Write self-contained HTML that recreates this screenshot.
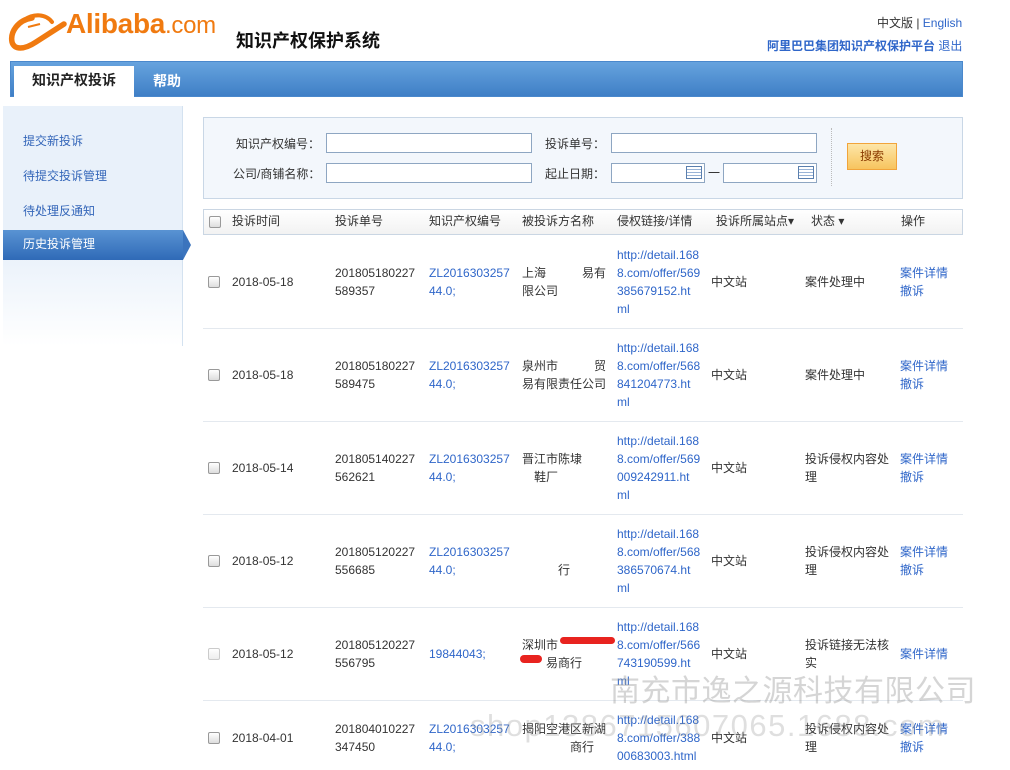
<!DOCTYPE html><html><head><meta charset="utf-8"><style>
*{margin:0;padding:0;box-sizing:border-box}
body{width:1010px;height:770px;overflow:hidden;background:#fff;font-family:"Liberation Sans","Noto Sans CJK SC",sans-serif;font-size:12px;color:#333;position:relative}
.a{position:absolute}
.blue{color:#2f66c9}
.nav{left:10px;top:61px;width:953px;height:36px;background:linear-gradient(#66a3de,#3f7fc6);border:1px solid #4a88cc}
.tab{left:14px;top:66px;width:120px;height:31px;background:#fff;font-size:14px;font-weight:bold;color:#222;text-align:center;line-height:28px}
.side{left:3px;top:106px;width:180px;height:240px;background:linear-gradient(#e9f1fa 60%,#fff);border-right:1px solid #d4e2f0}
.sl{left:23px;font-size:12px;color:#3466b9}
.act{left:3px;top:230px;width:180px;height:30px;background:linear-gradient(#5993d3,#2f6ab7);color:#fff;line-height:29px;padding-left:20px;font-size:12px}
.sbox{left:203px;top:117px;width:760px;height:82px;background:#f3f7fc;border:1px solid #c9d7e6}
.in{height:20px;border:1px solid #8ea6c2;background:#fff}
.lab{font-size:12px;color:#333}
.th{left:203px;top:209px;width:760px;height:26px;border:1px solid #cad6e3;background:linear-gradient(#fff,#f2f2f2)}
.cb{width:12px;height:12px;border:1px solid #999;border-radius:2px;background:linear-gradient(#fff,#ddd)}
.sep{left:203px;width:760px;height:1px;background:#e4e9ef}
.cell{line-height:18px;font-size:12px}
.cal{width:16px;height:13px;border:1px solid #5a7fae;background:repeating-linear-gradient(#fff 0 2px,#9ab4d6 2px 3px)}
</style></head><body>
<svg class="a" style="left:8px;top:10px" width="62" height="42" viewBox="0 0 62 42"><path d="M24 8 C10 10 2 22 4 32 C6 40 16 40 28 32 L56 14" stroke="#f07a10" stroke-width="5.5" fill="none" stroke-linecap="round"/><path d="M16 10 C26 3 38 4 44 12" stroke="#f07a10" stroke-width="4" fill="none" stroke-linecap="round"/><path d="M20 17 L32 14" stroke="#f07a10" stroke-width="2"/><circle cx="74" cy="43" r="1.5" fill="#f07a10"/></svg>
<div class="a" style="left:66px;top:8px;font-size:28px;font-weight:bold;color:#f07a10;letter-spacing:-0.3px">Alibaba<span style="font-weight:normal;font-size:24px">.com</span></div>
<div class="a" style="left:236px;top:27px;font-size:18px;font-weight:bold;color:#111">知识产权保护系统</div>
<div class="a" style="left:877px;top:14px;color:#333">中文版 | <span class="blue">English</span></div>
<div class="a" style="left:767px;top:37px;font-weight:bold;color:#2f66c9">阿里巴巴集团知识产权保护平台 <span style="font-weight:normal">退出</span></div>
<div class="a nav"></div>
<div class="a tab">知识产权投诉</div>
<div class="a" style="left:153px;top:71px;font-size:14px;font-weight:bold;color:#fff">帮助</div>
<div class="a side"></div>
<div class="a sl" style="top:132px">提交新投诉</div>
<div class="a sl" style="top:167px">待提交投诉管理</div>
<div class="a sl" style="top:202px">待处理反通知</div>
<div class="a act">历史投诉管理</div>
<div class="a" style="left:183px;top:230px;width:0;height:0;border-top:15px solid transparent;border-bottom:15px solid transparent;border-left:8px solid #3b74bd"></div>
<div class="a sbox"></div>
<div class="a lab" style="left:236px;top:135px">知识产权编号：</div>
<div class="a in" style="left:326px;top:133px;width:206px"></div>
<div class="a lab" style="left:233px;top:165px">公司/商铺名称：</div>
<div class="a in" style="left:326px;top:163px;width:206px"></div>
<div class="a lab" style="left:545px;top:135px">投诉单号：</div>
<div class="a in" style="left:611px;top:133px;width:206px"></div>
<div class="a lab" style="left:545px;top:165px">起止日期：</div>
<div class="a in" style="left:611px;top:163px;width:94px"></div>
<div class="a cal" style="left:686px;top:166px"></div>
<div class="a" style="left:708px;top:164px">一</div>
<div class="a in" style="left:723px;top:163px;width:94px"></div>
<div class="a cal" style="left:798px;top:166px"></div>
<div class="a" style="left:831px;top:128px;height:58px;border-left:1px dotted #bbb"></div>
<div class="a" style="left:847px;top:143px;width:50px;height:27px;background:linear-gradient(#fde6a8,#f7c45e);border:1px solid #f1a43b;color:#8a3a00;text-align:center;line-height:25px">搜索</div>
<div class="a th"></div>
<div class="a cb" style="left:209px;top:216px"></div>
<div class="a cell" style="left:232px;top:212px">投诉时间</div>
<div class="a cell" style="left:335px;top:212px">投诉单号</div>
<div class="a cell" style="left:429px;top:212px">知识产权编号</div>
<div class="a cell" style="left:522px;top:212px">被投诉方名称</div>
<div class="a cell" style="left:617px;top:212px">侵权链接/详情</div>
<div class="a cell" style="left:716px;top:212px">投诉所属站点▾</div>
<div class="a cell" style="left:811px;top:212px">状态 ▾</div>
<div class="a cell" style="left:901px;top:212px">操作</div>

<div class="a cb" style="left:208px;top:276px"></div><div class="a cell" style="left:232px;top:273px">2018-05-18</div>
<div class="a cell" style="left:335px;top:264px">201805180227<br>589357</div><div class="a cell blue" style="left:429px;top:264px">ZL2016303257<br>44.0;</div>
<div class="a cell" style="left:522px;top:264px">上海　　　易有<br>限公司</div><div class="a cell blue" style="left:617px;top:246px">http://detail.168<br>8.com/offer/569<br>385679152.ht<br>ml</div>
<div class="a cell" style="left:711px;top:273px">中文站</div><div class="a cell" style="left:805px;top:273px">案件处理中</div><div class="a cell blue" style="left:900px;top:264px">案件详情<br>撤诉</div>
<div class="a sep" style="top:328px"></div>

<div class="a cb" style="left:208px;top:369px"></div><div class="a cell" style="left:232px;top:366px">2018-05-18</div>
<div class="a cell" style="left:335px;top:357px">201805180227<br>589475</div><div class="a cell blue" style="left:429px;top:357px">ZL2016303257<br>44.0;</div>
<div class="a cell" style="left:522px;top:357px">泉州市　　　贸<br>易有限责任公司</div><div class="a cell blue" style="left:617px;top:339px">http://detail.168<br>8.com/offer/568<br>841204773.ht<br>ml</div>
<div class="a cell" style="left:711px;top:366px">中文站</div><div class="a cell" style="left:805px;top:366px">案件处理中</div><div class="a cell blue" style="left:900px;top:357px">案件详情<br>撤诉</div>
<div class="a sep" style="top:421px"></div>

<div class="a cb" style="left:208px;top:462px"></div><div class="a cell" style="left:232px;top:459px">2018-05-14</div>
<div class="a cell" style="left:335px;top:450px">201805140227<br>562621</div><div class="a cell blue" style="left:429px;top:450px">ZL2016303257<br>44.0;</div>
<div class="a cell" style="left:522px;top:450px">晋江市陈埭　　<br>　鞋厂</div><div class="a cell blue" style="left:617px;top:432px">http://detail.168<br>8.com/offer/569<br>009242911.ht<br>ml</div>
<div class="a cell" style="left:711px;top:459px">中文站</div><div class="a cell" style="left:805px;top:450px">投诉侵权内容处<br>理</div><div class="a cell blue" style="left:900px;top:450px">案件详情<br>撤诉</div>
<div class="a sep" style="top:514px"></div>

<div class="a cb" style="left:208px;top:555px"></div><div class="a cell" style="left:232px;top:552px">2018-05-12</div>
<div class="a cell" style="left:335px;top:543px">201805120227<br>556685</div><div class="a cell blue" style="left:429px;top:543px">ZL2016303257<br>44.0;</div>
<div class="a cell" style="left:522px;top:543px">　<br>　　　行</div><div class="a cell blue" style="left:617px;top:525px">http://detail.168<br>8.com/offer/568<br>386570674.ht<br>ml</div>
<div class="a cell" style="left:711px;top:552px">中文站</div><div class="a cell" style="left:805px;top:543px">投诉侵权内容处<br>理</div><div class="a cell blue" style="left:900px;top:543px">案件详情<br>撤诉</div>
<div class="a sep" style="top:607px"></div>

<div class="a cb" style="left:208px;top:648px;opacity:.5"></div><div class="a cell" style="left:232px;top:645px">2018-05-12</div>
<div class="a cell" style="left:335px;top:636px">201805120227<br>556795</div><div class="a cell blue" style="left:429px;top:645px">19844043;</div>
<div class="a cell" style="left:522px;top:636px">深圳市　　　　<br>　　易商行</div><div class="a cell blue" style="left:617px;top:618px">http://detail.168<br>8.com/offer/566<br>743190599.ht<br>ml</div>
<div class="a cell" style="left:711px;top:645px">中文站</div><div class="a cell" style="left:805px;top:636px">投诉链接无法核<br>实</div><div class="a cell blue" style="left:900px;top:645px">案件详情</div>
<div class="a" style="left:560px;top:637px;width:55px;height:7px;background:#e8231f;border-radius:4px"></div>
<div class="a" style="left:520px;top:655px;width:22px;height:8px;background:#e8231f;border-radius:4px"></div>
<div class="a sep" style="top:700px"></div>

<div class="a cb" style="left:208px;top:732px"></div><div class="a cell" style="left:232px;top:729px">2018-04-01</div>
<div class="a cell" style="left:335px;top:720px">201804010227<br>347450</div><div class="a cell blue" style="left:429px;top:720px">ZL2016303257<br>44.0;</div>
<div class="a cell" style="left:522px;top:720px">揭阳空港区新湖<br>　　　　商行</div><div class="a cell blue" style="left:617px;top:711px">http://detail.168<br>8.com/offer/388<br>00683003.html</div>
<div class="a cell" style="left:711px;top:729px">中文站</div><div class="a cell" style="left:805px;top:720px">投诉侵权内容处<br>理</div><div class="a cell blue" style="left:900px;top:720px">案件详情<br>撤诉</div>
<div class="a" style="left:610px;top:666px;font-size:30px;color:rgba(150,150,150,.4);letter-spacing:0.5px">南充市逸之源科技有限公司</div>
<div class="a" style="left:470px;top:708px;font-size:31px;color:rgba(150,150,150,.3);letter-spacing:1.5px">shop1386715607065.1688.com</div>
</body></html>
